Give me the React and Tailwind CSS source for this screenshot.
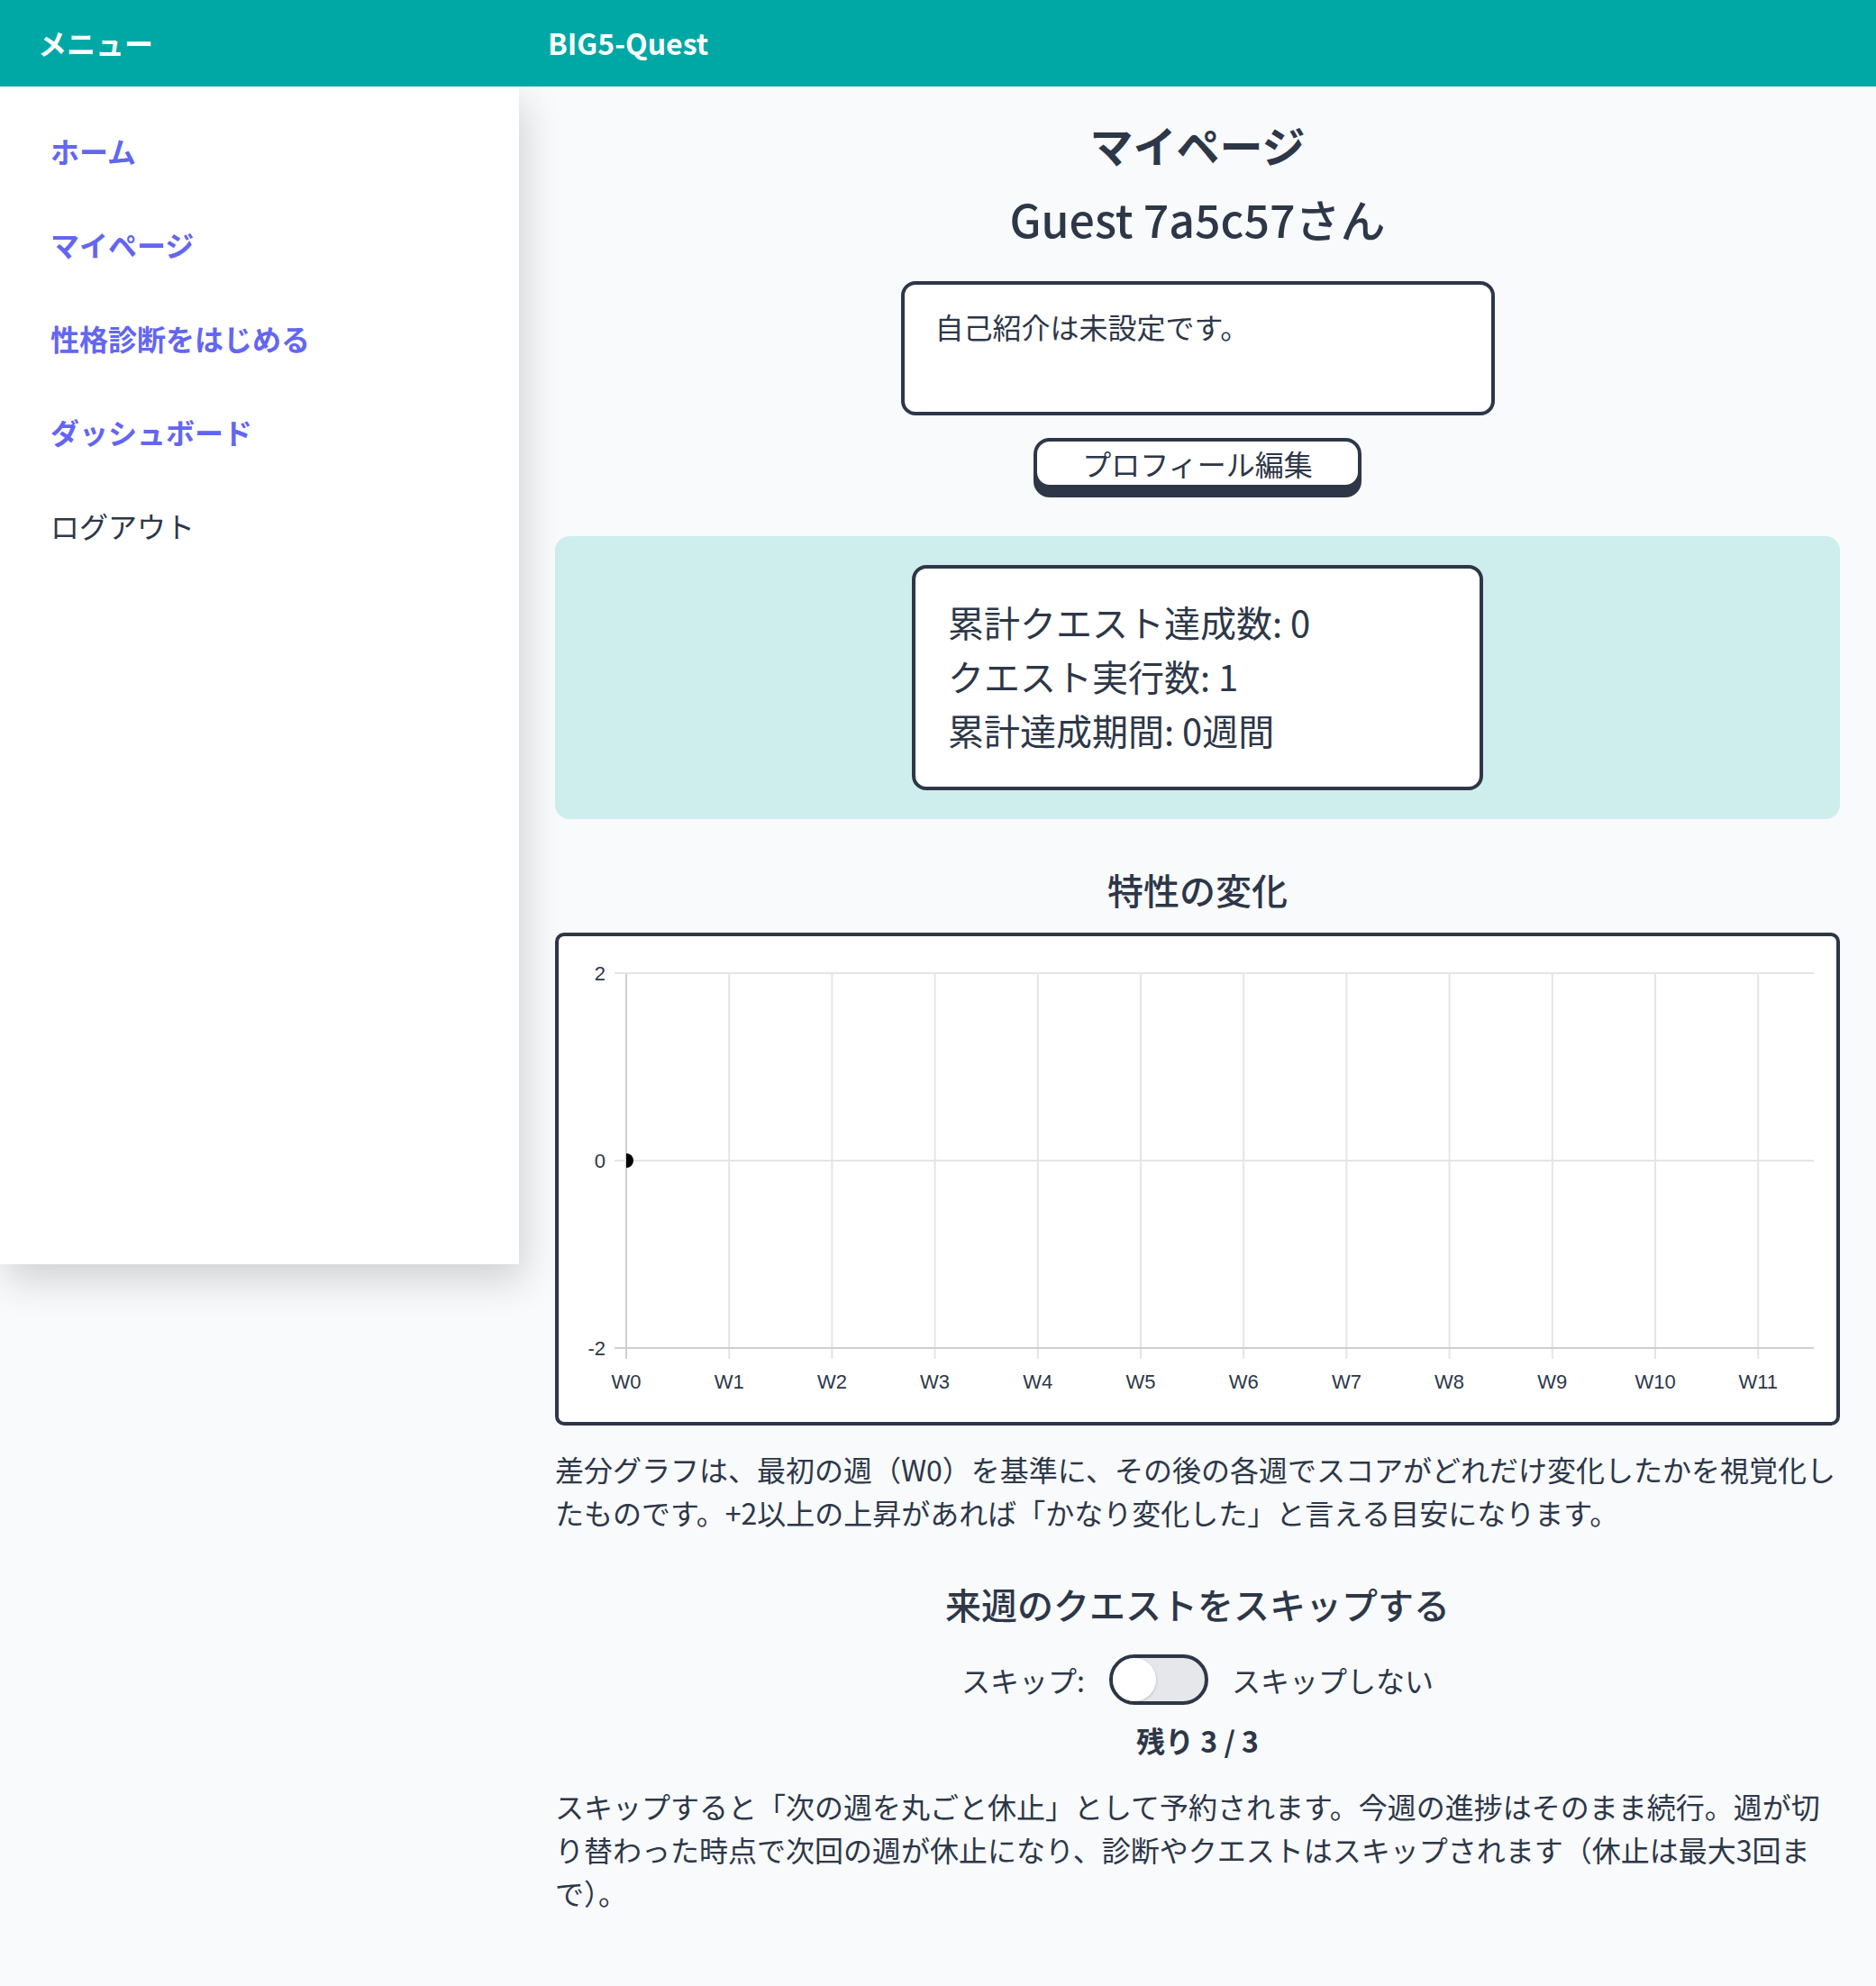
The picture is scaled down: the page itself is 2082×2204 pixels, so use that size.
import React from 'react'

const navItems = [
  { label: 'ホーム', active: true },
  { label: 'マイページ', active: true },
  { label: '性格診断をはじめる', active: true },
  { label: 'ダッシュボード', active: true },
  { label: 'ログアウト', active: false },
]

const weeks = Array.from({ length: 12 }, (_, i) => `W${i}`)

// Chart coordinates are relative to the inner area of the bordered chart box
const X0 = 75
const STEP = 114.2
const Y_TOP = 41
const Y_ZERO = 249
const Y_BOTTOM = 457
const X_LEFT = 62
const X_RIGHT = 1393

function DiffChart() {
  return (
    <svg width="1418" height="539" viewBox="0 0 1418 539" className="block">
      <defs>
        <clipPath id="plotArea">
          <rect x={X0} y={Y_TOP - 10} width={X_RIGHT - X0} height={Y_BOTTOM - Y_TOP + 20} />
        </clipPath>
      </defs>

      {/* vertical grid */}
      {weeks.map((w, i) => {
        const x = X0 + i * STEP
        return (
          <line key={w} x1={x} x2={x} y1={Y_TOP} y2={Y_BOTTOM + 12}
            stroke={i === 0 ? '#cfcfcf' : '#e5e5e5'} strokeWidth="2" />
        )
      })}

      {/* horizontal grid */}
      <line x1={X_LEFT} x2={X_RIGHT} y1={Y_TOP} y2={Y_TOP} stroke="#e5e5e5" strokeWidth="2" />
      <line x1={X_LEFT} x2={X_RIGHT} y1={Y_ZERO} y2={Y_ZERO} stroke="#e5e5e5" strokeWidth="2" />
      <line x1={X_LEFT} x2={X_RIGHT} y1={Y_BOTTOM} y2={Y_BOTTOM} stroke="#cfcfcf" strokeWidth="2" />

      {/* y labels */}
      {[['2', Y_TOP], ['0', Y_ZERO], ['-2', Y_BOTTOM]].map(([t, y]) => (
        <text key={t} x="52" y={y} textAnchor="end" dominantBaseline="central"
          fontFamily="'Liberation Sans', Arial, sans-serif" fontSize="22" fill="#2d3748">
          {t}
        </text>
      ))}

      {/* x labels */}
      {weeks.map((w, i) => (
        <text key={w} x={X0 + i * STEP} y="494" textAnchor="middle" dominantBaseline="central"
          fontFamily="'Liberation Sans', Arial, sans-serif" fontSize="22" fill="#2d3748">
          {w}
        </text>
      ))}

      {/* W0 data point, clipped by the plot area */}
      <g clipPath="url(#plotArea)">
        <circle cx={X0} cy={Y_ZERO} r="8" fill="#000" />
      </g>
    </svg>
  )
}

function SkipToggle() {
  return (
    <div className="w-[110px] h-[56px] rounded-full border-4 border-[#2d3748] bg-[#e5e7eb] flex items-center">
      <div className="w-[48px] h-[48px] rounded-full bg-white shadow-[0_1px_3px_rgba(0,0,0,0.2)]" />
    </div>
  )
}

export default function App() {
  return (
    <div className="min-h-[2204px] bg-[#f8fafc] text-[#2d3748] font-['Noto_Sans_CJK_JP','Noto_Sans',sans-serif]">
      {/* Top bar */}
      <header className="relative z-20 h-[96px] bg-[#00a8a5] flex items-center text-white font-bold text-[32px] leading-none">
        <div className="w-[576px] shrink-0 pl-[42px] -mt-[3px]">メニュー</div>
        <div className="pl-[32px] -mt-[2px]">BIG5-Quest</div>
      </header>

      <div className="flex items-start">
        {/* Side menu */}
        <aside className="relative z-10 w-[576px] h-[1307px] shrink-0 bg-white pt-[19px] shadow-[6px_18px_40px_rgba(0,0,0,0.16)]">
          <nav className="flex flex-col">
            {navItems.map((item) => (
              <a key={item.label} href="#"
                className={
                  item.active
                    ? 'h-[104px] flex items-center px-[56px] text-[32px] leading-none font-semibold text-[#6366f1]'
                    : 'h-[104px] flex items-center px-[56px] text-[32px] leading-none font-normal text-[#2d3748]'
                }>
                {item.label}
              </a>
            ))}
          </nav>
        </aside>

        {/* Main content */}
        <main className="flex-1 min-w-0 px-[40px] pt-[32px] pb-[60px]">
          <h1 className="text-center text-[48px] leading-[64px] font-semibold">マイページ</h1>
          <p className="mt-[17px] text-center text-[50px] leading-[66px] font-medium">Guest 7a5c57さん</p>

          <div className="mt-[37px] mx-auto w-[659px] h-[149px] rounded-[16px] border-4 border-[#2d3748] bg-white px-[34px] pt-[26px] text-[32px] leading-[40px]">
            自己紹介は未設定です。
          </div>

          <div className="mt-[25px] flex justify-center">
            <button className="w-[364px] h-[56px] rounded-[18px] border-4 border-[#2d3748] bg-white shadow-[0_10px_0_#2d3748] text-[32px] leading-none text-[#2d3748]">
              プロフィール編集
            </button>
          </div>

          {/* Stats */}
          <section className="mt-[53px] rounded-[16px] bg-[#cdeeed] py-[32px] flex justify-center">
            <div className="w-[634px] rounded-[16px] border-4 border-[#2d3748] bg-white px-[36px] pt-[29px] pb-[33px] text-[40px] leading-[60px]">
              <p>累計クエスト達成数: 0</p>
              <p>クエスト実行数: 1</p>
              <p>累計達成期間: 0週間</p>
            </div>
          </section>

          <h2 className="mt-[50px] text-center text-[40px] leading-[56px] font-medium">特性の変化</h2>

          <div className="mt-[20px] rounded-[10px] border-4 border-[#2d3748] bg-white">
            <DiffChart />
          </div>

          <p className="mt-[24px] text-[32px] leading-[48px]">
            差分グラフは、最初の週（W0）を基準に、その後の各週でスコアがどれだけ変化したかを視覚化したものです。+2以上の上昇があれば「かなり変化した」と言える目安になります。
          </p>

          <h2 className="mt-[50px] text-center text-[40px] leading-[56px] font-medium">来週のクエストをスキップする</h2>

          <div className="mt-[28px] h-[56px] flex items-center justify-center text-[32px] leading-none">
            <span>スキップ:</span>
            <div className="ml-[27px] mr-[26px]">
              <SkipToggle />
            </div>
            <span>スキップしない</span>
          </div>

          <p className="mt-[15px] text-center text-[32px] leading-[48px] font-bold">残り 3 / 3</p>

          <p className="mt-[25px] text-[32px] leading-[48px]">
            スキップすると「次の週を丸ごと休止」として予約されます。今週の進捗はそのまま続行。週が切り替わった時点で次回の週が休止になり、診断やクエストはスキップされます（休止は最大3回まで）。
          </p>
        </main>
      </div>
    </div>
  )
}
